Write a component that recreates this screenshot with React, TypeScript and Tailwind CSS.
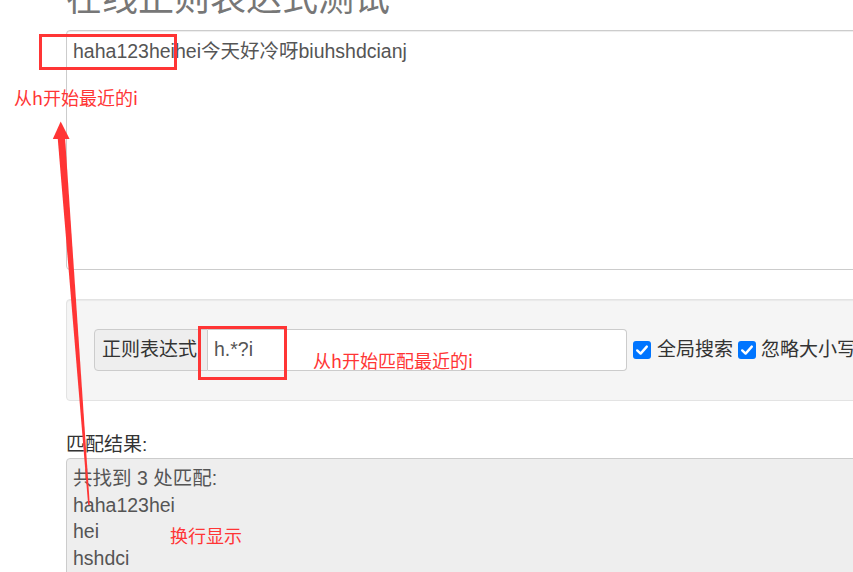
import React from 'react';

const CheckBox: React.FC = () => (
  <span className="flex h-[18px] w-[18px] items-center justify-center rounded-[3px] bg-[#0075ff]">
    <svg viewBox="0 0 18 18" className="h-[18px] w-[18px]">
      <path d="M4.2 9.4 L7.6 12.6 L13.8 5.6" fill="none" stroke="#fff" strokeWidth="2.4" strokeLinecap="round" strokeLinejoin="round" />
    </svg>
  </span>
);

const App: React.FC = () => {
  const matches = ['haha123hei', 'hei', 'hshdci'];

  return (
    <div className="relative h-[572px] w-[853px] overflow-hidden bg-white font-['Liberation_Sans','Noto_Sans_CJK_SC',sans-serif]">
      <div className="w-[1120px] pl-[66px]">
        <h1 className="mt-[-25px] mb-[15px] font-['Noto_Sans_CJK_SC',sans-serif] text-[36px] leading-[40px] text-[#777]">
          在线正则表达式测试
        </h1>

        {/* Test text */}
        <div className="h-[240px] rounded-[4px] border border-[#ccc] px-[6px] pt-[7px] text-[19.5px] leading-[26px] text-[#555] shadow-[inset_0_1px_1px_rgba(0,0,0,0.075)]">
          haha123heihei今天好冷呀biuhshdcianj
        </div>

        {/* Regex bar */}
        <div className="mt-[29px] flex h-[102px] items-center rounded-[4px] border border-[#e3e3e3] bg-[#f5f5f5] pl-[27px] shadow-[inset_0_1px_1px_rgba(0,0,0,0.05)]">
          <div className="flex h-[42px] text-[19px]">
            <span className="flex w-[114px] items-center rounded-l-[4px] border border-[#ccc] bg-[#eee] pl-[7px] text-[#333]">
              正则表达式
            </span>
            <span className="flex w-[419px] items-center rounded-r-[4px] border border-l-0 border-[#ccc] bg-white pl-[6px] text-[19.5px] text-[#555]">
              h.*?i
            </span>
          </div>
          <div className="ml-[6px] flex items-center gap-[6px] text-[19px] text-[#333]">
            <CheckBox />
            <span>全局搜索</span>
          </div>
          <div className="ml-[5px] flex items-center gap-[5px] text-[19px] text-[#333]">
            <CheckBox />
            <span>忽略大小写</span>
          </div>
        </div>

        {/* Results */}
        <div className="mt-[31px] text-[19px] leading-[26px] text-[#333]">匹配结果:</div>
        <div className="h-[200px] rounded-[4px] border border-[#ccc] bg-[#eee] px-[6px] pt-[6px] text-[19.5px] leading-[26.6px] text-[#555]">
          <div>共找到 3 处匹配:</div>
          {matches.map((m) => (
            <div key={m}>{m}</div>
          ))}
        </div>
      </div>

      {/* Annotations */}
      <div className="absolute left-[39px] top-[34px] h-[36px] w-[138px] border-[3px] border-[#ff3535]" />
      <div className="absolute left-[198px] top-[326px] h-[54px] w-[89px] border-[3px] border-[#ff3535]" />
      <div className="absolute left-[14px] top-[88px] font-['Noto_Sans_CJK_SC',sans-serif] text-[18px] leading-[18px] text-[#ff3535]">
        从h开始最近的i
      </div>
      <div className="absolute left-[313px] top-[351px] font-['Noto_Sans_CJK_SC',sans-serif] text-[18px] leading-[18px] text-[#ff3535]">
        从h开始匹配最近的i
      </div>
      <div className="absolute left-[170px] top-[526px] font-['Noto_Sans_CJK_SC',sans-serif] text-[18px] leading-[18px] text-[#ff3535]">
        换行显示
      </div>
      <svg className="pointer-events-none absolute left-0 top-0" width="853" height="572">
        <polygon points="57.6,137 65,137 89.8,505 88.2,505" fill="#ff3535" />
        <polygon points="60.7,121.5 52.8,139 69.6,139" fill="#ff3535" />
      </svg>
    </div>
  );
};

export default App;
